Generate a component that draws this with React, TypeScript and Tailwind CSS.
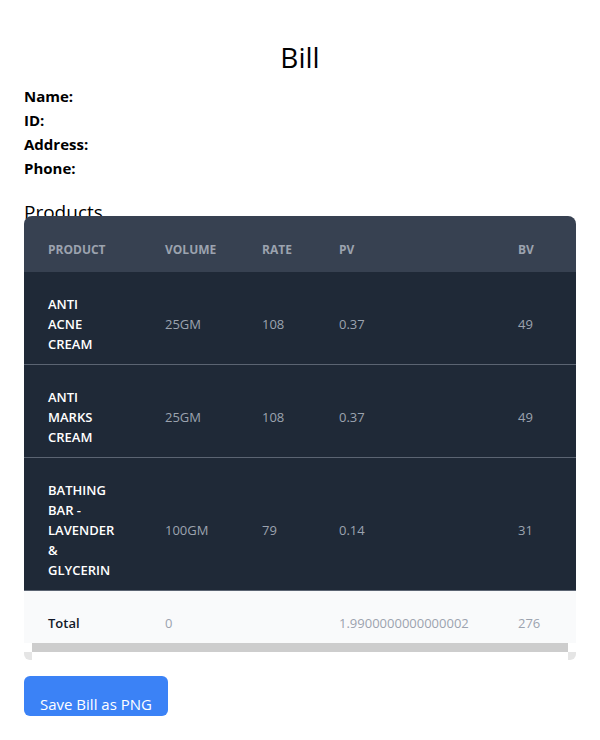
import React from 'react'

const rows = [
  { name: 'ANTI ACNE CREAM', volume: '25GM', rate: '108', pv: '0.37', bv: '49' },
  { name: 'ANTI MARKS CREAM', volume: '25GM', rate: '108', pv: '0.37', bv: '49' },
  { name: 'BATHING BAR\u00a0- LAVENDER & GLYCERIN', volume: '100GM', rate: '79', pv: '0.14', bv: '31' },
]

export default function App() {
  return (
    <div className="min-h-[740px] bg-white px-6 pt-[39px] text-black" style={{ fontFamily: '"Open Sans", "Noto Sans", sans-serif' }}>
      <h1 className="text-center text-[28px] leading-9">Bill</h1>

      <div className="mt-[9px] text-[15px] font-bold leading-6">
        <div>Name:</div>
        <div>ID:</div>
        <div>Address:</div>
        <div>Phone:</div>
      </div>

      <h2 className="mt-5 text-[19px] leading-6">Products</h2>

      <div className="relative -mt-2 w-[552px]">
        <table className="w-full table-fixed border-collapse text-left text-[13px] leading-5">
          <colgroup>
            <col className="w-[117px]" />
            <col className="w-[97px]" />
            <col className="w-[77px]" />
            <col className="w-[179px]" />
            <col className="w-[82px]" />
          </colgroup>
          <thead>
            <tr className="bg-[#374151] text-[12px] uppercase text-[#9ca3af]">
              <th className="rounded-tl-lg px-6 pt-[26px] pb-[14px] font-bold leading-4">Product</th>
              <th className="px-6 pt-[26px] pb-[14px] font-bold leading-4">Volume</th>
              <th className="px-6 pt-[26px] pb-[14px] font-bold leading-4">Rate</th>
              <th className="px-6 pt-[26px] pb-[14px] font-bold leading-4">PV</th>
              <th className="rounded-tr-lg px-6 pt-[26px] pb-[14px] font-bold leading-4">BV</th>
            </tr>
          </thead>
          <tbody>
            {rows.map((r) => (
              <tr key={r.name} className="border-b border-[#5b6472] bg-[#1f2937] text-[#9ca3af]">
                <td className="px-6 pt-[22px] pb-[10px] font-semibold text-white">
                  <span className="block w-min">{r.name}</span>
                </td>
                <td className="px-6 pt-[22px] pb-[10px]">{r.volume}</td>
                <td className="px-6 pt-[22px] pb-[10px]">{r.rate}</td>
                <td className="px-6 pt-[22px] pb-[10px]">{r.pv}</td>
                <td className="px-6 pt-[22px] pb-[10px]">{r.bv}</td>
              </tr>
            ))}
            <tr className="bg-[#f9fafb] text-[#9ca3af]">
              <td className="px-6 pt-[22px] pb-[10px] font-semibold text-[#111827]">Total</td>
              <td className="px-6 pt-[22px] pb-[10px]">0</td>
              <td className="px-6 pt-[22px] pb-[10px]"></td>
              <td className="whitespace-nowrap pt-[22px] pb-[10px] pl-6">1.9900000000000002</td>
              <td className="px-6 pt-[22px] pb-[10px]">276</td>
            </tr>
          </tbody>
        </table>

        <div className="flex h-[17px]">
          <div className="flex w-2 flex-col">
            <div className="h-[9px]" />
            <div className="h-2 rounded-bl-md bg-[#e5e5e5]" />
          </div>
          <div className="h-[9px] flex-1 bg-[#cdcdcd]" />
          <div className="flex w-2 flex-col">
            <div className="h-[9px]" />
            <div className="h-2 rounded-br-md bg-[#e5e5e5]" />
          </div>
        </div>
      </div>

      <button className="mt-4 h-10 rounded-md bg-[#3b82f6] px-4 pt-[18px] pb-[2px] text-[15px] leading-5 text-white">
        Save Bill as PNG
      </button>
    </div>
  )
}
